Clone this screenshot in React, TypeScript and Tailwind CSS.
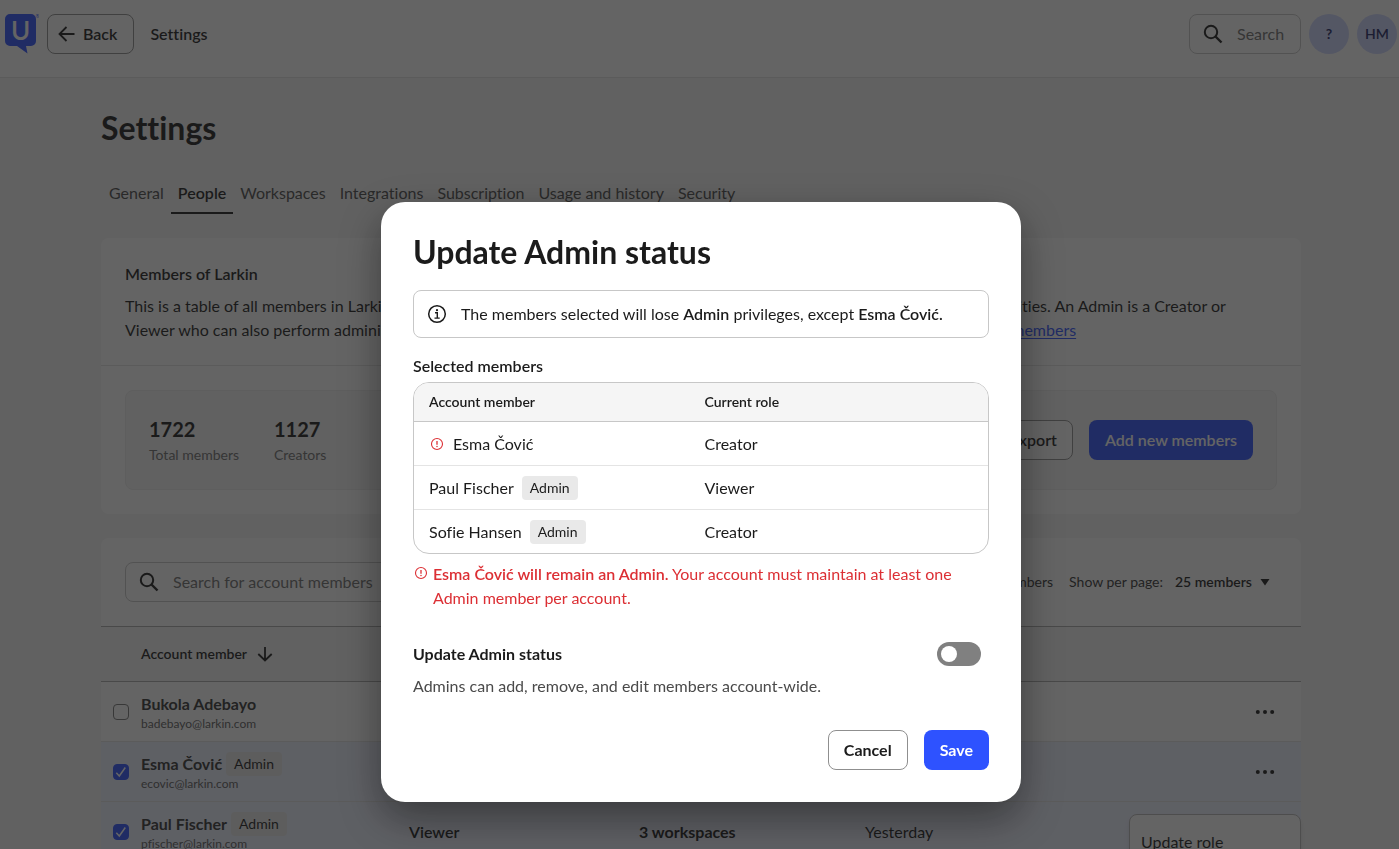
import React, { useState } from 'react';
import { clsx } from 'clsx';

type Member = {
  name: string;
  email: string;
  role: string;
  workspaces: string;
  lastVisit: string;
  admin?: boolean;
};

const TABS = ['General', 'People', 'Workspaces', 'Integrations', 'Subscription', 'Usage and history', 'Security'];

const STATS = [
  { value: '1722', label: 'Total members' },
  { value: '1127', label: 'Creators' },
];

const MEMBERS: Member[] = [
  { name: 'Bukola Adebayo', email: 'badebayo@larkin.com', role: 'Creator', workspaces: '2 workspaces', lastVisit: 'Today' },
  { name: 'Esma Čović', email: 'ecovic@larkin.com', role: 'Creator', workspaces: '4 workspaces', lastVisit: 'Today', admin: true },
  { name: 'Paul Fischer', email: 'pfischer@larkin.com', role: 'Viewer', workspaces: '3 workspaces', lastVisit: 'Yesterday', admin: true },
];

const SELECTED = [
  { name: 'Esma Čović', role: 'Creator', locked: true },
  { name: 'Paul Fischer', role: 'Viewer', locked: false },
  { name: 'Sofie Hansen', role: 'Creator', locked: false },
];

const Logo = () => (
  <svg width="34" height="40" viewBox="0 0 34 40" className="shrink-0" role="img" aria-label="Home">
    <path d="M5 0h21a5 5 0 0 1 5 5v22a5 5 0 0 1-5 5h-5l1.500 7.500L12 32H5a5 5 0 0 1-5-5V5a5 5 0 0 1 5-5z" fill="#2e52ff" />
    <text x="15.500" y="26" textAnchor="middle" fontSize="26" fontWeight="600" fill="#fff">U</text>
    <text x="30.500" y="4" fontSize="5" fill="#2e52ff">®</text>
  </svg>
);

const SearchIcon = () => (
  <svg width="20" height="20" viewBox="0 0 20 20" fill="none" stroke="#1b1b1b" strokeWidth="2" className="shrink-0" aria-hidden="true">
    <circle cx="8" cy="8" r="6.200" />
    <path d="M12.500 12.500l6 6" strokeWidth="2.400" />
  </svg>
);

const AlertIcon = ({ className }: { className?: string }) => (
  <svg width="16" height="16" viewBox="0 0 16 16" fill="none" stroke="#dc2f34" className={clsx('shrink-0', className)} aria-hidden="true">
    <circle cx="8" cy="8" r="5.500" strokeWidth="1.100" />
    <path d="M8 5v3.700" strokeWidth="1.300" />
    <circle cx="8" cy="10.400" r=".75" fill="#dc2f34" stroke="none" />
  </svg>
);

const InfoIcon = () => (
  <svg width="20" height="20" viewBox="0 0 20 20" fill="none" stroke="#1b1b1b" strokeWidth="1.500" className="shrink-0" aria-hidden="true">
    <circle cx="10" cy="10" r="8.300" />
    <path d="M8 8.800h2.300v5M7.500 14.100h5.200" strokeWidth="1.400" />
    <circle cx="10" cy="6.200" r="1.100" fill="#1b1b1b" stroke="none" />
  </svg>
);

const AdminTag = () => (
  <span className="inline-flex h-6 items-center rounded bg-[#e9e9e9] px-2 text-sm font-normal">Admin</span>
);

const Header = () => (
  <header className="flex h-[78px] items-start border-b border-[#e4e4e4] bg-white pt-3.5 pr-0.5 pl-[5px]">
    <Logo />
    <button type="button" className="ml-2 flex h-10 items-center gap-2 rounded-lg border border-[#8f8f8f] pr-4 pl-2.5 font-semibold">
      <svg width="17" height="16" viewBox="0 0 17 16" fill="none" stroke="#1b1b1b" strokeWidth="1.800" aria-hidden="true">
        <path d="M16.500 8H1.800M8.500 1L1.500 8l7 7" />
      </svg>
      Back
    </button>
    <span className="ml-4 leading-10 font-semibold">Settings</span>
    <div className="ml-auto flex gap-2">
      <label className="flex h-10 w-28 items-center gap-3.5 rounded-lg border border-[#c7c7c7] pl-[13px]">
        <SearchIcon />
        <input type="search" aria-label="Search" placeholder="Search" className="w-full min-w-0 outline-none placeholder:text-[#6f6f6f]" />
      </label>
      <button type="button" aria-label="Help" className="size-10 rounded-full bg-[#ced6ff] text-sm font-bold text-[#1c2563]">?</button>
      <button type="button" aria-label="Account" className="size-10 rounded-full bg-[#ced6ff] text-sm font-semibold text-[#1c2563]">HM</button>
    </div>
  </header>
);

const MembersCard = () => (
  <section className="rounded-lg bg-white">
    <div className="border-b border-[#e4e4e4] px-6 pt-6 pb-[23px]">
      <h2 className="mb-2 font-semibold">Members of Larkin</h2>
      <p>
        This is a table of all members in Larkin. Members can be Creators or Viewers, and each role has its own group of account capabilities. An Admin is a Creator or
        Viewer who can also perform administrative tasks across your account. Learn more about the roles and permissions of{' '}
        <a href="#members" className="text-[#2e52ff] underline underline-offset-2">account members</a>
      </p>
    </div>
    <div className="p-6">
      <div className="flex h-25 items-center rounded-lg border border-[#ececec] bg-[#f5f5f5] px-[23px]">
        {STATS.map((stat) => (
          <div key={stat.label} className="w-[125px] pt-0.5">
            <div className="text-xl leading-7 font-bold">{stat.value}</div>
            <div className="text-sm leading-6 text-[#6f6f6f]">{stat.label}</div>
          </div>
        ))}
        <button type="button" className="ml-auto h-10 rounded-lg border border-[#8f8f8f] bg-white px-[15px] font-semibold">Export</button>
        <button type="button" className="ml-4 h-10 rounded-lg bg-[#2e52ff] px-4 font-semibold text-white">Add new members</button>
      </div>
    </div>
  </section>
);

const MemberRow = ({ member, menuOpen }: { member: Member; menuOpen: boolean }) => {
  const [checked, setChecked] = useState(!!member.admin);
  const cell = clsx('h-15 border-b border-[#e4e4e4]', checked && 'bg-[#edf1ff]');

  return (
    <tr>
      <td className={clsx(cell, 'pl-3')}>
        <span className="relative block size-4">
          <input
            type="checkbox"
            aria-label={`Select ${member.name}`}
            checked={checked}
            onChange={() => setChecked(!checked)}
            className="block size-4 appearance-none rounded border border-[#767676] bg-white checked:border-[#2e52ff] checked:bg-[#2e52ff]"
          />
          {checked && (
            <svg viewBox="0 0 16 16" fill="none" stroke="#fff" strokeWidth="1.500" className="pointer-events-none absolute inset-0 size-4" aria-hidden="true">
              <path d="M3.300 8.800l3 3.200 6-8.500" />
            </svg>
          )}
        </span>
      </td>
      <td className={cell}>
        <div className="flex h-6 items-center gap-1">
          <span className="font-bold text-[#333]">{member.name}</span>
          {member.admin && <AdminTag />}
        </div>
        <div className="text-xs leading-4 text-[#5c5c5c]">{member.email}</div>
      </td>
      <td className={clsx(cell, 'font-semibold')}>{member.role}</td>
      <td className={clsx(cell, 'font-bold')}>{member.workspaces}</td>
      <td className={cell}>{member.lastVisit}</td>
      <td className={clsx(cell, 'relative pr-6')}>
        <button type="button" aria-label={`Actions for ${member.name}`} className="ml-auto block">
          <svg width="24" height="24" viewBox="0 0 24 24" fill="#1b1b1b" className="block" aria-hidden="true">
            <circle cx="4.800" cy="12" r="2" />
            <circle cx="12" cy="12" r="2" />
            <circle cx="19.200" cy="12" r="2" />
          </svg>
        </button>
        {menuOpen && (
          <div className="absolute top-3 right-0 w-[172px] rounded-lg border border-[#b8b8b8] bg-white py-[15px] shadow-md">
            <button type="button" className="block w-full px-[11px] text-left">Update role</button>
          </div>
        )}
      </td>
    </tr>
  );
};

const MembersTable = () => (
  <section className="mt-6 rounded-lg bg-white">
    <div className="flex items-center p-6 text-sm">
      <label className="flex h-10 w-100 items-center gap-3.5 rounded-lg border border-[#c7c7c7] px-[13px] text-base">
        <SearchIcon />
        <input type="search" aria-label="Search for account members" placeholder="Search for account members" className="w-full outline-none placeholder:text-[#6f6f6f]" />
      </label>
      <span className="ml-auto text-[#333]">1–25 of 1722 members</span>
      <label htmlFor="per-page" className="ml-4 text-[#333]">Show per page:</label>
      <select id="per-page" className="ml-3 appearance-none field-sizing-content font-semibold">
        <option>25 members</option>
        <option>50 members</option>
      </select>
      <svg width="10" height="8" viewBox="0 0 10 8" fill="#1b1b1b" className="mr-[7px] ml-2" aria-hidden="true">
        <path d="M.5 1h9L5 7.500z" />
      </svg>
    </div>
    <table className="w-full table-fixed border-separate border-spacing-0 text-left">
      <thead>
        <tr className="text-sm">
          <td className="h-14 w-10 border-y border-[#aaa] bg-[#f5f5f5]" />
          <th className="w-[268px] border-y border-[#aaa] bg-[#f5f5f5] font-semibold">
            <button type="button" className="flex items-center gap-2">
              Account member
              <svg width="18" height="16" viewBox="0 0 18 16" fill="none" stroke="#1b1b1b" strokeWidth="1.800" aria-hidden="true">
                <path d="M10 1v13.500M3.300 8l6.700 6.500L16.700 8" />
              </svg>
            </button>
          </th>
          <th className="w-[230px] border-y border-[#aaa] bg-[#f5f5f5] font-semibold">Role</th>
          <th className="w-[226px] border-y border-[#aaa] bg-[#f5f5f5] font-semibold">Workspaces</th>
          <th className="border-y border-[#aaa] bg-[#f5f5f5] font-semibold">Last visit</th>
          <td className="border-y border-[#aaa] bg-[#f5f5f5]" />
        </tr>
      </thead>
      <tbody>
        {MEMBERS.map((member) => (
          <MemberRow key={member.email} member={member} menuOpen={member.name === 'Paul Fischer'} />
        ))}
      </tbody>
    </table>
  </section>
);

const UpdateAdminDialog = () => {
  const [isAdmin, setIsAdmin] = useState(false);

  return (
    <div role="dialog" aria-modal="true" aria-labelledby="dialog-title" className="w-full max-w-160 rounded-3xl bg-white p-8 shadow-[0_16px_40px_rgba(0,0,0,0.4)]">
      <h1 id="dialog-title" className="text-[32px] leading-9 font-bold">Update Admin status</h1>

      <div className="mt-5 flex h-12 items-center gap-3.5 rounded-lg border border-[#c7c7c7] px-[13px]">
        <InfoIcon />
        <p>The members selected will lose <strong className="font-semibold">Admin</strong> privileges, except <strong className="font-semibold">Esma Čović.</strong></p>
      </div>

      <h2 className="mt-4 font-semibold">Selected members</h2>
      <div className="mt-1 overflow-hidden rounded-2xl border border-[#c7c7c7]">
        <table className="w-full table-fixed border-separate border-spacing-0 text-left">
          <thead>
            <tr className="bg-[#f5f5f5] text-sm">
              <th className="h-[39px] w-[48%] border-b border-[#c7c7c7] pl-[15px] font-semibold">Account member</th>
              <th className="border-b border-[#c7c7c7] pl-[15px] font-semibold">Current role</th>
            </tr>
          </thead>
          <tbody>
            {SELECTED.map((member, i) => {
              const cell = i < SELECTED.length - 1 ? 'h-11 border-b border-[#e4e4e4] pl-[15px]' : 'h-[43px] pl-[15px]';
              return (
                <tr key={member.name}>
                  <td className={cell}>
                    <div className="flex items-center gap-2">
                      {member.locked && <AlertIcon />}
                      {member.name}
                      {!member.locked && <AdminTag />}
                    </div>
                  </td>
                  <td className={cell}>{member.role}</td>
                </tr>
              );
            })}
          </tbody>
        </table>
      </div>

      <div className="mt-2 flex gap-1 text-[#dc2f34]">
        <AlertIcon className="mt-[3px]" />
        <p><strong className="font-semibold">Esma Čović will remain an Admin.</strong> Your account must maintain at least one Admin member per account.</p>
      </div>

      <div className="mt-8 flex items-center justify-between pr-2">
        <label htmlFor="admin-status" className="font-bold">Update Admin status</label>
        <input
          id="admin-status"
          type="checkbox"
          role="switch"
          checked={isAdmin}
          onChange={() => setIsAdmin(!isAdmin)}
          className="h-6 w-11 appearance-none rounded-full bg-[#808080] p-1 before:block before:size-4 before:rounded-full before:bg-white checked:bg-[#2e52ff] checked:before:translate-x-5"
        />
      </div>
      <p className="mt-2 text-[#4a4a4a]">Admins can add, remove, and edit members account-wide.</p>

      <div className="mt-8 flex justify-end gap-4">
        <button type="button" className="h-10 rounded-lg border border-[#8f8f8f] px-[15px] font-bold">Cancel</button>
        <button type="button" className="h-10 rounded-lg bg-[#2e52ff] px-4 font-bold text-white">Save</button>
      </div>
    </div>
  );
};

export default function App() {
  return (
    <div className="h-screen overflow-hidden bg-[#f5f5f5] font-[Lato,sans-serif] text-base text-[#1b1b1b] [font-variant-ligatures:no-common-ligatures]">
      <Header />
      <main className="pl-[3px]">
        <div className="mx-auto max-w-300">
          <h1 className="pt-8 text-[32px] leading-9 font-bold">Settings</h1>
          <nav className="mt-7 mb-6 flex pl-px">
            {TABS.map((tab) => (
              <a
                key={tab}
                href={`#${tab}`}
                className={clsx(
                  'flex h-10 items-center border-b-2 px-[7px]',
                  tab === 'People' ? 'border-[#1b1b1b] font-semibold' : 'border-transparent text-[#4a4a4a]'
                )}
              >
                {tab}
              </a>
            ))}
          </nav>
          <MembersCard />
          <MembersTable />
        </div>
      </main>

      {/* Backdrop */}
      <div className="fixed inset-0 flex items-start justify-center bg-[#1b1b1b]/68 pt-[202px] pl-[3px]">
        <UpdateAdminDialog />
      </div>
    </div>
  );
}
